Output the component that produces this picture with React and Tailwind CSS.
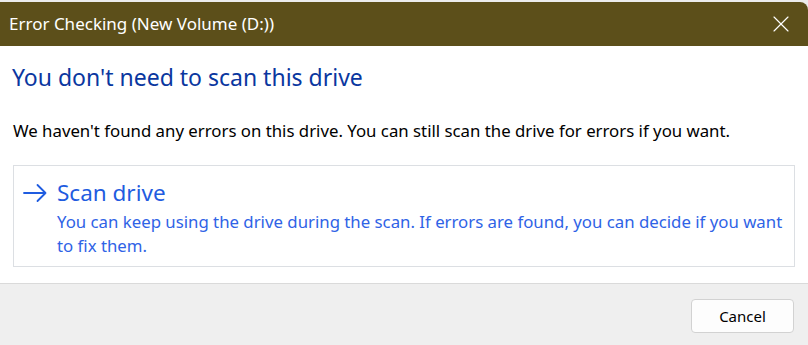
import { X } from 'lucide-react';

export default function App() {
  return (
    <div className="w-[808px] h-[345px] bg-[#ececec] overflow-hidden" style={{ fontFamily: '"Noto Sans", "Open Sans", sans-serif' }}>
      <div className="mt-[2px] h-[343px] flex flex-col bg-white rounded-tr-[8px] overflow-hidden">
        {/* Title bar */}
        <div className="h-[44px] shrink-0 bg-[#5c4f1a] flex items-center justify-between pl-[9px] pr-[13px]">
          <span className="text-white text-[17px]">Error Checking (New Volume (D:))</span>
          <X className="w-[28px] h-[28px] text-white" strokeWidth={1} />
        </div>

        {/* Body */}
        <div className="flex-1 px-[13px] pt-[16px]">
          <h1 className="text-[#0a37a0] text-[23px] leading-[30px] -ml-px">You don't need to scan this drive</h1>
          <p className="mt-[28px] text-[16.8px] text-black leading-[22px]">
            We haven't found any errors on this drive. You can still scan the drive for errors if you want.
          </p>
          <div className="mt-[23px] h-[102px] border border-[#dcdfe3] flex items-start pt-[12px] pl-[9px] pr-[10px]">
            <svg width="24" height="20" viewBox="0 0 24 20" className="mt-[5px] shrink-0 text-[#1f5ce0]" fill="none" stroke="currentColor" strokeWidth="1.8" strokeLinecap="round" strokeLinejoin="round">
              <path d="M1 10H22.5M14.5 2L22.5 10L14.5 18" />
            </svg>
            <div className="ml-[10px]">
              <div className="text-[#1f5ce0] text-[22.5px] leading-[30px]">Scan drive</div>
              <div className="mt-[2px] text-[#2f63e6] text-[16.8px] leading-[24px]">
                You can keep using the drive during the scan. If errors are found, you can decide if you want to fix them.
              </div>
            </div>
          </div>
        </div>

        {/* Footer */}
        <div className="h-[62px] shrink-0 bg-[#efefef] border-t border-[#dadada] flex items-start justify-end pt-[15px] pr-[14px]">
          <button className="w-[103px] h-[34px] bg-[#fdfdfd] border border-[#d2d2d2] rounded-[4px] text-[15px] text-black">
            Cancel
          </button>
        </div>
      </div>
    </div>
  );
}
